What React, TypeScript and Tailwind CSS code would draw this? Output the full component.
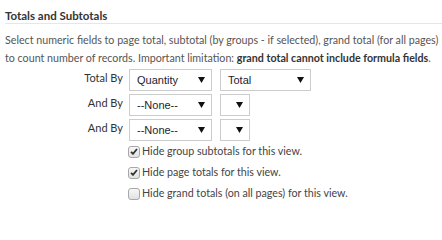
import React from 'react';

const rows = [
  { label: 'Total By', first: 'Quantity', second: 'Total', wide: true },
  { label: 'And By', first: '--None--', second: '', wide: false },
  { label: 'And By', first: '--None--', second: '', wide: false },
];

const options = [
  { text: 'Hide group subtotals for this view.', checked: true },
  { text: 'Hide page totals for this view.', checked: true },
  { text: 'Hide grand totals (on all pages) for this view.', checked: false },
];

const Arrow = () => (
  <svg width="7" height="6" viewBox="0 0 7 6" className="shrink-0">
    <path d="M0 0 L7 0 L3.5 6 Z" fill="#111" />
  </svg>
);

const FakeSelect = ({ value, width }: { value: string; width: string }) => (
  <div
    className={`${width} h-[22px] flex items-center justify-between border border-[#cccccc] bg-white pl-[7px] pr-[6px] text-[11px] text-[#1c1c2e] font-['Liberation_Sans',Arial,sans-serif]`}
  >
    <span>{value}</span>
    <Arrow />
  </div>
);

const Box = ({ checked }: { checked: boolean }) => (
  <div className="w-[12px] h-[12px] rounded-[3px] border border-[#a8a8a8] bg-gradient-to-b from-[#f7f7f7] to-[#e2e2e2] flex items-center justify-center shrink-0">
    {checked && (
      <svg width="8" height="7" viewBox="0 0 8 7">
        <path d="M1 3.8 L3 5.8 L7 1" stroke="#333" strokeWidth="1.8" fill="none" />
      </svg>
    )}
  </div>
);

export default function App() {
  return (
    <div className="w-[442px] h-[208px] bg-white px-[5px] pt-[9px] font-['Lato',sans-serif] overflow-hidden">
      <div className="text-[11.5px] leading-[13px] font-bold text-[#333] pb-[1px] border-b border-[#e6e6e6] mr-[-5px]">
        Totals and Subtotals
      </div>
      <p className="mt-[7px] text-[10.7px] leading-[18px] text-[#555] whitespace-nowrap">
        Select numeric fields to page total, subtotal (by groups - if selected), grand total (for all pages)
        <br />
        to count number of records. Important limitation:{' '}
        <span className="font-bold text-[#333]">grand total cannot include formula fields</span>.
      </p>
      <div className="mt-[2px] grid grid-cols-[118px_auto] gap-x-[6px] gap-y-[3px] justify-start">
        {rows.map((row, i) => (
          <React.Fragment key={i}>
            <div className="flex justify-end text-[11px] leading-[13px] pt-[2px] text-[#333]">
              <span>{row.label}</span>
            </div>
            <div className="flex gap-[8px]">
              <FakeSelect value={row.first} width="w-[83px]" />
              <FakeSelect value={row.second} width={row.wide ? 'w-[91px]' : 'w-[30px]'} />
            </div>
          </React.Fragment>
        ))}
      </div>
      <div className="pl-[123px] flex flex-col">
        {options.map((o, i) => (
          <label key={i} className="h-[21px] flex items-center gap-[2px] text-[10.7px] text-[#444]">
            <Box checked={o.checked} />
            <span>{o.text}</span>
          </label>
        ))}
      </div>
    </div>
  );
}
